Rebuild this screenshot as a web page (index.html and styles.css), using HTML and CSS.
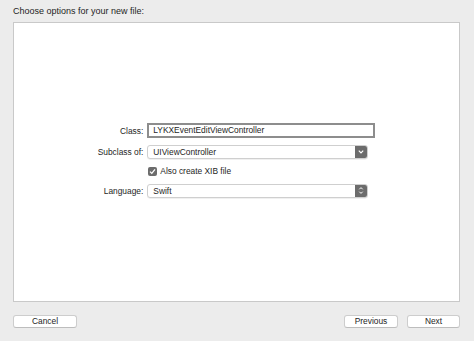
FILE: index.html
```html
<!DOCTYPE html>
<html>
  <head>
    <title>New File</title>
    <link rel="stylesheet" href="styles.css">
  </head>
  <body>
    <div class="sheet">
      <div class="sheet-title">Choose options for your new file:</div>

      <!-- Options panel -->
      <div class="panel">
        <div class="form">
          <label class="form-label">Class:</label>
          <div class="text-field">LYKXEventEditViewController</div>

          <label class="form-label">Subclass of:</label>
          <div class="popup">
            <span class="popup-value">UIViewController</span>
            <span class="popup-arrow">
              <svg width="12" height="13" viewBox="0 0 12 13">
                <path d="M3.8 5.6 L6 7.8 L8.2 5.6" fill="none" stroke="#fff" stroke-width="1.2" />
              </svg>
            </span>
          </div>

          <span></span>
          <div class="check-row">
            <span class="checkbox">
              <svg width="9" height="9" viewBox="0 0 9 9">
                <path d="M2 4.6 L3.8 6.4 L7 2.4" fill="none" stroke="#fff" stroke-width="1.3" />
              </svg>
            </span>
            <span>Also create XIB file</span>
          </div>

          <label class="form-label">Language:</label>
          <div class="popup">
            <span class="popup-value">Swift</span>
            <span class="popup-arrow">
              <svg width="12" height="13" viewBox="0 0 12 13">
                <path d="M4.3 5.3 L6 3.6 L7.7 5.3 M4.3 7.7 L6 9.4 L7.7 7.7" fill="none" stroke="#fff" stroke-width="1" />
              </svg>
            </span>
          </div>
        </div>
      </div>

      <!-- Footer buttons -->
      <div class="footer">
        <button class="button">Cancel</button>
        <div class="footer-right">
          <button class="button button-wide">Previous</button>
          <button class="button">Next</button>
        </div>
      </div>
    </div>
  </body>
</html>
```

FILE: styles.css
```css
body {
  margin: 0;
  padding: 0;
  background-color: #ececec;
  font-family: "Liberation Sans", Arial, sans-serif;
  color: #1e1e1e;
}
.sheet {
  width: 474px;
  height: 341px;
  display: flex;
  flex-direction: column;
}
.sheet-title {
  font-size: 9px;
  line-height: 11px;
  padding: 6px 13px 5px;
}
.panel {
  height: 278px;
  margin: 0 14px 0 13px;
  background-color: #fff;
  border: 1px solid #c9c9c9;
  display: flex;
  align-items: center;
  justify-content: center;
}
.form {
  display: grid;
  grid-template-columns: auto 228px;
  grid-template-rows: 15px 15px 12px 15px;
  column-gap: 4px;
  row-gap: 6px;
  align-items: center;
  font-size: 8.4px;
  margin-top: -3px;
}
.form-label {
  text-align: right;
}
.text-field {
  height: 15px;
  box-sizing: border-box;
  border: 2px solid #8d8d8d;
  padding: 0 4px;
  line-height: 11px;
}
.popup {
  width: 221px;
  height: 14px;
  box-sizing: border-box;
  border: 1px solid #cfcfcf;
  border-radius: 3px;
  display: flex;
  align-items: center;
  overflow: hidden;
  box-shadow: 0 0.5px 0.5px rgba(0, 0, 0, 0.12);
}
.popup-value {
  flex: 1;
  padding-left: 5px;
}
.popup-arrow {
  width: 12px;
  height: 14px;
  background-color: #6c6c6c;
  display: flex;
  align-items: center;
  justify-content: center;
}
.check-row {
  display: flex;
  align-items: center;
  gap: 3px;
  padding-left: 1px;
}
.checkbox {
  width: 9px;
  height: 9px;
  border-radius: 2px;
  background-color: #6c6c6c;
  display: flex;
}
.footer {
  display: flex;
  justify-content: space-between;
  padding: 13px 14px 0 13px;
}
.footer-right {
  display: flex;
  gap: 9px;
}
.button {
  width: 64px;
  height: 13px;
  padding: 0;
  font-family: "Liberation Sans", Arial, sans-serif;
  font-size: 8.4px;
  line-height: 11px;
  color: #1e1e1e;
  background-color: #fff;
  border: 1px solid #cdcdcd;
  border-bottom-color: #bdbdbd;
  border-radius: 3px;
}
.footer-right .button {
  width: 53px;
}
.footer-right .button-wide {
  width: 54px;
}
```
